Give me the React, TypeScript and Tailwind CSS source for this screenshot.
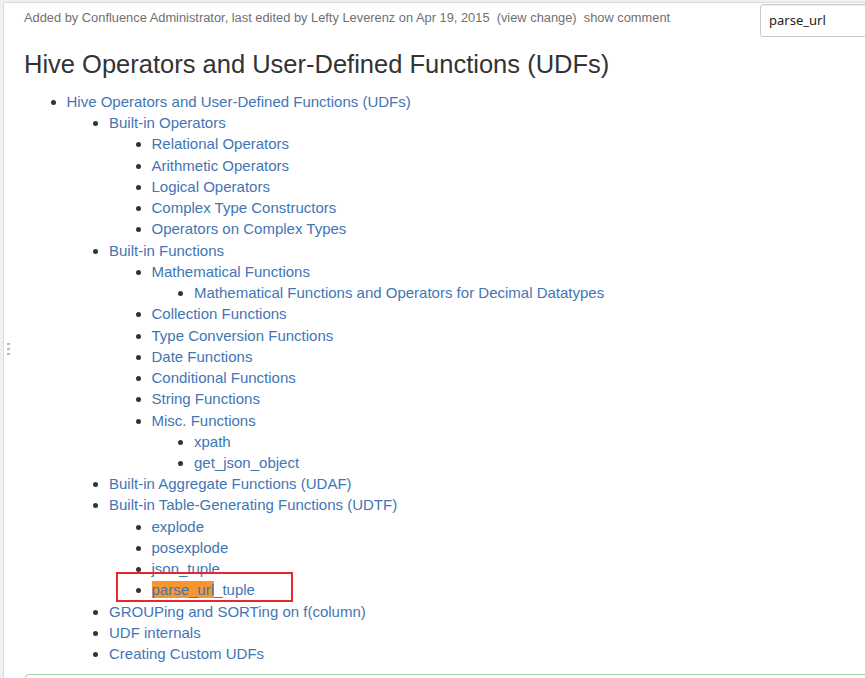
import React from 'react';

type Item = { label: string; children?: Item[]; hit?: boolean };

const toc: Item[] = [
  {
    label: 'Hive Operators and User-Defined Functions (UDFs)',
    children: [
      {
        label: 'Built-in Operators',
        children: [
          { label: 'Relational Operators' },
          { label: 'Arithmetic Operators' },
          { label: 'Logical Operators' },
          { label: 'Complex Type Constructors' },
          { label: 'Operators on Complex Types' },
        ],
      },
      {
        label: 'Built-in Functions',
        children: [
          {
            label: 'Mathematical Functions',
            children: [{ label: 'Mathematical Functions and Operators for Decimal Datatypes' }],
          },
          { label: 'Collection Functions' },
          { label: 'Type Conversion Functions' },
          { label: 'Date Functions' },
          { label: 'Conditional Functions' },
          { label: 'String Functions' },
          {
            label: 'Misc. Functions',
            children: [{ label: 'xpath' }, { label: 'get_json_object' }],
          },
        ],
      },
      { label: 'Built-in Aggregate Functions (UDAF)' },
      {
        label: 'Built-in Table-Generating Functions (UDTF)',
        children: [
          { label: 'explode' },
          { label: 'posexplode' },
          { label: 'json_tuple' },
          { label: 'parse_url_tuple', hit: true },
        ],
      },
      { label: 'GROUPing and SORTing on f(column)' },
      { label: 'UDF internals' },
      { label: 'Creating Custom UDFs' },
    ],
  },
];

const TocList = ({ items }: { items: Item[] }) => (
  <ul className="list-disc pl-[42.5px] marker:text-[#333]">
    {items.map((item, i) => (
      <li key={i}>
        {item.hit ? (
          <span className="relative inline-block">
            <span className="absolute left-[-36px] top-[-7px] h-[30px] w-[177px] border-2 border-[#e8262b]"></span>
            <a className="text-[#3f76b5]">
              <span className="bg-[#f7962f]">parse_url</span>_tuple
            </a>
          </span>
        ) : (
          <a className="text-[#3f76b5]">{item.label}</a>
        )}
        {item.children && <TocList items={item.children} />}
      </li>
    ))}
  </ul>
);

const App = () => {
  return (
    <div className="relative h-[678px] w-[865px] overflow-hidden bg-[#f0f0f0] pt-[2px] font-['Liberation_Sans',Arial,sans-serif]">
      <div className="h-full ml-[3px] border-l border-t border-[#dcdcdc] bg-white">
        {/* Meta row */}
        <div className="flex items-start">
          <div className="pl-[20px] pt-[7px] text-[12.85px] leading-[16px] text-[#707070]">
            Added by Confluence Administrator, last edited by Lefty Leverenz on Apr 19, 2015&nbsp; (view change)&nbsp; show comment
          </div>
          <div className="ml-auto mt-[1px] mr-[-40px] flex h-[33px] w-[145px] shrink-0 items-center rounded-[3px] border border-[#c8c8c8] bg-white pl-[8px] text-[13px] text-[#222] shadow-[inset_0_1px_1px_rgba(0,0,0,0.06)] font-['Noto_Sans','DejaVu_Sans',sans-serif]">
            parse_url
          </div>
        </div>

        {/* Title */}
        <h1 className="pl-[20px] pt-[11px] text-[25.5px] leading-[32px] font-normal text-[#333]">
          Hive Operators and User-Defined Functions (UDFs)
        </h1>

        {/* TOC */}
        <div className="pl-[20px] pt-[11px] text-[15px] leading-[21.23px] text-[#333]">
          <TocList items={toc} />
        </div>

        {/* Next panel */}
        <div className="ml-[21px] mt-[10px] h-[40px] w-[900px] rounded-[4px] border border-[#9ed19e]"></div>
      </div>

      {/* Resize handle */}
      <div className="absolute left-[7px] top-[343px] flex flex-col gap-[3px]">
        <span className="block h-[2px] w-[3px] bg-[#bbb]"></span>
        <span className="block h-[2px] w-[3px] bg-[#bbb]"></span>
        <span className="block h-[2px] w-[3px] bg-[#bbb]"></span>
      </div>
    </div>
  );
};

export default App;
